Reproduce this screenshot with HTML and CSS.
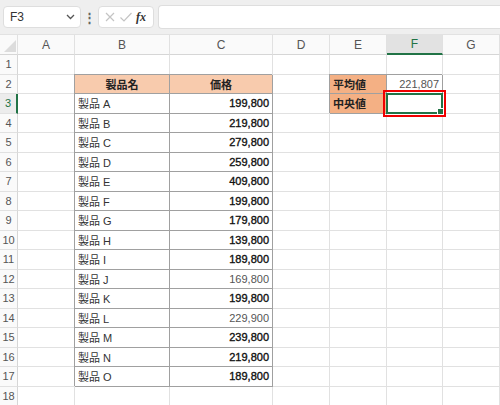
FILE: index.html
```html
<!DOCTYPE html>
<html>
<head>
  <link rel="stylesheet" href="styles.css">
</head>
<body>

<div class="toolbar">
  <div class="namebox">
    <span>F3</span>
    <svg width="9" height="6" viewBox="0 0 9 6"><path d="M1 1 L4.5 4.5 L8 1" fill="none" stroke="#555" stroke-width="1.3"/></svg>
  </div>
  <div class="dots">⋮</div>
  <div class="fxbox">
    <svg width="12" height="12" viewBox="0 0 12 12"><path d="M2 2 L10 10 M10 2 L2 10" stroke="#c4c4c4" stroke-width="1.2"/></svg>
    <svg width="14" height="12" viewBox="0 0 14 12"><path d="M1.5 6.5 L5 10 L12.5 2" fill="none" stroke="#c4c4c4" stroke-width="1.2"/></svg>
    <span class="fx">fx</span>
  </div>
  <div class="formula"></div>
</div>

<div class="sheet">
  <div class="corner"><svg width="12" height="12" viewBox="0 0 12 12"><path d="M12 0 L12 12 L0 12 Z" fill="#dcdcdc"/></svg></div>
  <div class="colhead">A</div>
  <div class="colhead">B</div>
  <div class="colhead">C</div>
  <div class="colhead">D</div>
  <div class="colhead">E</div>
  <div class="colhead active">F</div>
  <div class="colhead">G</div>

  <div class="rowhead">1</div><div class="c"></div><div class="c"></div><div class="c"></div><div class="c"></div><div class="c"></div><div class="c"></div><div class="c"></div>

  <div class="rowhead">2</div><div class="c"></div>
  <div class="c t th">製品名</div><div class="c t th">価格</div>
  <div class="c"></div>
  <div class="c t lab">平均値</div><div class="c t num light">221,807</div>
  <div class="c"></div>

  <div class="rowhead active">3</div><div class="c"></div>
  <div class="c t name">製品 A</div><div class="c t num">199,800</div>
  <div class="c"></div>
  <div class="c t lab">中央値</div>
  <div class="c sel"><span class="handle"></span><span class="mark"></span></div>
  <div class="c"></div>

  <div class="rowhead">4</div><div class="c"></div><div class="c t name">製品 B</div><div class="c t num">219,800</div><div class="c"></div><div class="c"></div><div class="c"></div><div class="c"></div>
  <div class="rowhead">5</div><div class="c"></div><div class="c t name">製品 C</div><div class="c t num">279,800</div><div class="c"></div><div class="c"></div><div class="c"></div><div class="c"></div>
  <div class="rowhead">6</div><div class="c"></div><div class="c t name">製品 D</div><div class="c t num">259,800</div><div class="c"></div><div class="c"></div><div class="c"></div><div class="c"></div>
  <div class="rowhead">7</div><div class="c"></div><div class="c t name">製品 E</div><div class="c t num">409,800</div><div class="c"></div><div class="c"></div><div class="c"></div><div class="c"></div>
  <div class="rowhead">8</div><div class="c"></div><div class="c t name">製品 F</div><div class="c t num">199,800</div><div class="c"></div><div class="c"></div><div class="c"></div><div class="c"></div>
  <div class="rowhead">9</div><div class="c"></div><div class="c t name">製品 G</div><div class="c t num">179,800</div><div class="c"></div><div class="c"></div><div class="c"></div><div class="c"></div>
  <div class="rowhead">10</div><div class="c"></div><div class="c t name">製品 H</div><div class="c t num">139,800</div><div class="c"></div><div class="c"></div><div class="c"></div><div class="c"></div>
  <div class="rowhead">11</div><div class="c"></div><div class="c t name">製品 I</div><div class="c t num">189,800</div><div class="c"></div><div class="c"></div><div class="c"></div><div class="c"></div>
  <div class="rowhead">12</div><div class="c"></div><div class="c t name">製品 J</div><div class="c t num light">169,800</div><div class="c"></div><div class="c"></div><div class="c"></div><div class="c"></div>
  <div class="rowhead">13</div><div class="c"></div><div class="c t name">製品 K</div><div class="c t num">199,800</div><div class="c"></div><div class="c"></div><div class="c"></div><div class="c"></div>
  <div class="rowhead">14</div><div class="c"></div><div class="c t name">製品 L</div><div class="c t num light">229,900</div><div class="c"></div><div class="c"></div><div class="c"></div><div class="c"></div>
  <div class="rowhead">15</div><div class="c"></div><div class="c t name">製品 M</div><div class="c t num">239,800</div><div class="c"></div><div class="c"></div><div class="c"></div><div class="c"></div>
  <div class="rowhead">16</div><div class="c"></div><div class="c t name">製品 N</div><div class="c t num">219,800</div><div class="c"></div><div class="c"></div><div class="c"></div><div class="c"></div>
  <div class="rowhead">17</div><div class="c"></div><div class="c t name">製品 O</div><div class="c t num">189,800</div><div class="c"></div><div class="c"></div><div class="c"></div><div class="c"></div>
  <div class="rowhead">18</div><div class="c"></div><div class="c"></div><div class="c"></div><div class="c"></div><div class="c"></div><div class="c"></div><div class="c"></div>
</div>

</body>
</html>
```

FILE: styles.css
```css
body {
  margin: 0;
  font-family: "Liberation Sans", "Noto Sans CJK JP", sans-serif;
  font-size: 11px;
  color: #333;
  background: #fff;
  overflow: hidden;
}
.toolbar {
  height: 35px;
  background: #efefef;
  display: flex;
  align-items: center;
  box-sizing: border-box;
  padding: 0 0 0 3px;
  border-bottom: 1px solid #e2e2e2;
}
.namebox {
  width: 78px;
  height: 22px;
  box-sizing: border-box;
  background: #fff;
  border: 1px solid #dedede;
  border-radius: 4px;
  display: flex;
  align-items: center;
  justify-content: space-between;
  padding: 0 5px 0 6px;
  font-size: 12px;
  color: #333;
}
.dots {
  width: 17px;
  text-align: center;
  color: #666;
  font-size: 13px;
  font-weight: bold;
}
.fxbox {
  width: 56px;
  height: 22px;
  box-sizing: border-box;
  background: #fff;
  border: 1px solid #dedede;
  border-radius: 4px;
  display: flex;
  align-items: center;
  gap: 3px;
  padding-left: 5px;
}
.fx {
  font-family: "Liberation Serif", serif;
  font-style: italic;
  font-weight: bold;
  font-size: 12px;
  color: #333;
}
.formula {
  flex: 1;
  height: 22px;
  margin-left: 4px;
  background: #fff;
  border: 1px solid #dedede;
  border-right: none;
  border-radius: 4px 0 0 4px;
}
.sheet {
  display: grid;
  grid-template-columns: 18px 57px 95px 103px 57px 57px 56px 57px;
  grid-template-rows: 20px;
  grid-auto-rows: 19.5px;
}
.corner {
  background: #fafafa;
  border-right: 1px solid #e1e1e1;
  border-bottom: 1px solid #d6d6d6;
  display: flex;
  align-items: flex-end;
  justify-content: flex-end;
  padding: 0 1px 2px 0;
  box-sizing: border-box;
}
.colhead {
  background: #fafafa;
  border-right: 1px solid #e1e1e1;
  border-bottom: 1px solid #d6d6d6;
  box-sizing: border-box;
  display: flex;
  align-items: center;
  justify-content: center;
  color: #555;
  font-size: 12px;
}
.colhead.active {
  background: #e2e2e2;
  color: #217346;
  border-bottom: 2px solid #217346;
}
.rowhead {
  background: #fafafa;
  border-right: 1px solid #d6d6d6;
  border-bottom: 1px solid #e1e1e1;
  box-sizing: border-box;
  display: flex;
  align-items: center;
  justify-content: center;
  color: #555;
  font-size: 11px;
}
.rowhead.active {
  background: #ececec;
  color: #217346;
  border-right: 2px solid #217346;
}
.c {
  border-right: 1px solid #e1e1e1;
  border-bottom: 1px solid #e1e1e1;
  box-sizing: border-box;
  display: flex;
  align-items: center;
  padding: 0 3px;
  white-space: nowrap;
}
.t {
  border-right-color: #a0a0a0;
  border-bottom-color: #a0a0a0;
  box-shadow: -1px -1px 0 0 #a0a0a0;
}
.th {
  background: #f8cbad;
  justify-content: center;
  font-weight: bold;
  color: #222;
}
.lab {
  background: #f4b084;
  font-weight: bold;
  color: #222;
}
.name {
  color: #333;
}
.num {
  justify-content: flex-end;
  color: #111;
  -webkit-text-stroke: 0.35px #111;
}
.num.light {
  color: #555;
  -webkit-text-stroke: 0;
}
.sel {
  position: relative;
  border: 2px solid #217346;
  margin: -1px 0 0 -1px;
}
.handle {
  position: absolute;
  right: -3px;
  bottom: -3px;
  width: 5px;
  height: 5px;
  background: #217346;
  border: 1px solid #fff;
}
.mark {
  position: absolute;
  left: -5px;
  top: -5px;
  right: -5px;
  bottom: -5px;
  border: 2px solid #f00000;
}
```
